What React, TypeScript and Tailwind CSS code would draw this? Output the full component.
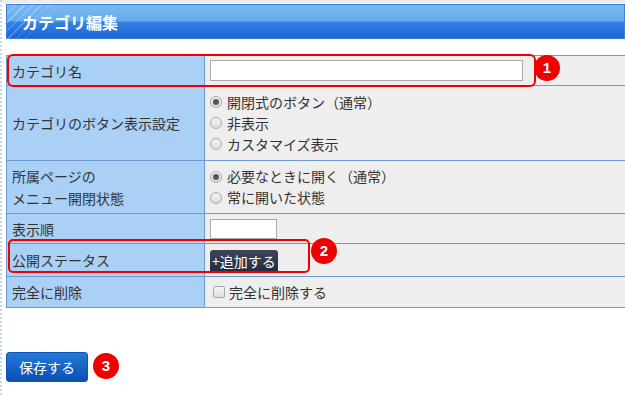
// カテゴリ編集フォーム（管理画面の一部を再現）
const font = "font-['Meiryo','Noto_Sans_CJK_JP',sans-serif]";

function Radio({ checked, label }: { checked?: boolean; label: string }) {
  return (
    <div className="flex h-[21px] items-center gap-[5px]">
      <span className="flex h-[12px] w-[12px] items-center justify-center rounded-full border border-[#a8a8a8] bg-[linear-gradient(to_bottom,#f4f4f4,#dcdcdc)]">
        {checked && <span className="h-[6px] w-[6px] rounded-full bg-[#555]" />}
      </span>
      <span>{label}</span>
    </div>
  );
}

function Badge({ n, className }: { n: number; className: string }) {
  return (
    <span
      className={`absolute flex h-[26px] w-[26px] items-center justify-center rounded-full bg-[#f00000] text-[15px] font-bold text-white font-['Liberation_Sans',sans-serif] ${className}`}
    >
      {n}
    </span>
  );
}

function Row({
  label,
  h,
  children,
}: {
  label: React.ReactNode;
  h: string;
  children: React.ReactNode;
}) {
  return (
    <tr className={h}>
      <th className="w-[198px] border border-[#6c9ad4] bg-[#abd0f5] px-[5px] text-left align-middle font-normal leading-[22px]">
        {label}
      </th>
      <td className="border border-[#6c9ad4] bg-[#eeeeee] px-[5px] align-middle">
        {children}
      </td>
    </tr>
  );
}

export default function App() {
  return (
    <div
      className={`relative h-[395px] w-[625px] overflow-hidden border-l-2 border-dotted border-[#c6d6ec] bg-white text-[14px] text-[#333] ${font}`}
    >
      <div className="h-[3px] bg-[#ececec]" />
      {/* 見出しバー */}
      <div className="relative ml-[4px] mt-[1px] flex h-[35px] items-center border border-[#3a7edc] bg-[linear-gradient(to_bottom,#7ab9f1_0%,#64abee_48%,#3482e3_52%,#1c63d8_100%)] pl-[15px]">
        <span className="absolute left-0 top-0 h-[35px] w-[50px] bg-[repeating-linear-gradient(135deg,rgba(255,255,255,0.35)_0px,rgba(255,255,255,0.35)_1px,transparent_1px,transparent_6px)] [mask-image:linear-gradient(135deg,black_30%,transparent_70%)]" />
        <h1 className="relative text-[16px] font-bold text-white">カテゴリ編集</h1>
      </div>

      <table className="ml-[4px] mt-[16px] w-[640px] border-collapse">
        <tbody>
          <Row label="カテゴリ名" h="h-[30px]">
            <div className="h-[21px] w-[313px] border border-[#a9a9a9] bg-white" />
          </Row>
          <Row label="カテゴリのボタン表示設定" h="h-[75px]">
            <Radio checked label="開閉式のボタン（通常）" />
            <Radio label="非表示" />
            <Radio label="カスタマイズ表示" />
          </Row>
          <Row
            label={
              <>
                所属ページの
                <br />
                メニュー開閉状態
              </>
            }
            h="h-[53px]"
          >
            <Radio checked label="必要なときに開く（通常）" />
            <Radio label="常に開いた状態" />
          </Row>
          <Row label="表示順" h="h-[30px]">
            <div className="h-[20px] w-[67px] border border-[#a9a9a9] bg-white" />
          </Row>
          <Row label="公開ステータス" h="h-[33px]">
            <button className="mt-[2px] flex h-[23px] items-center rounded-[3px] bg-[linear-gradient(to_bottom,#3c455b,#232a3b)] px-[2px] text-[14px] text-white">
              +追加する
            </button>
          </Row>
          <Row label="完全に削除" h="h-[31px]">
            <div className="flex items-center gap-[4px] pl-[3px]">
              <span className="h-[12px] w-[12px] rounded-[2px] border border-[#a8a8a8] bg-[linear-gradient(to_bottom,#f6f6f6,#dedede)]" />
              <span>完全に削除する</span>
            </div>
          </Row>
        </tbody>
      </table>

      <div className="ml-[4px] mt-[44px] flex items-center">
        <button className="h-[30px] w-[82px] rounded-[3px] border border-[#0b55b8] bg-[linear-gradient(to_bottom,#2479d6,#0a4fb4)] text-[14px] text-white">
          保存する
        </button>
      </div>

      {/* 注釈の枠と番号 */}
      <span className="absolute left-[5px] top-[54px] h-[33px] w-[529px] rounded-[6px] border-2 border-[#ee0000]" />
      <Badge n={1} className="left-[532px] top-[55px]" />
      <span className="absolute left-[6px] top-[239px] h-[34px] w-[302px] rounded-[5px] border-2 border-[#ee0000]" />
      <Badge n={2} className="left-[309px] top-[238px]" />
      <Badge n={3} className="left-[91px] top-[353px]" />
    </div>
  );
}
